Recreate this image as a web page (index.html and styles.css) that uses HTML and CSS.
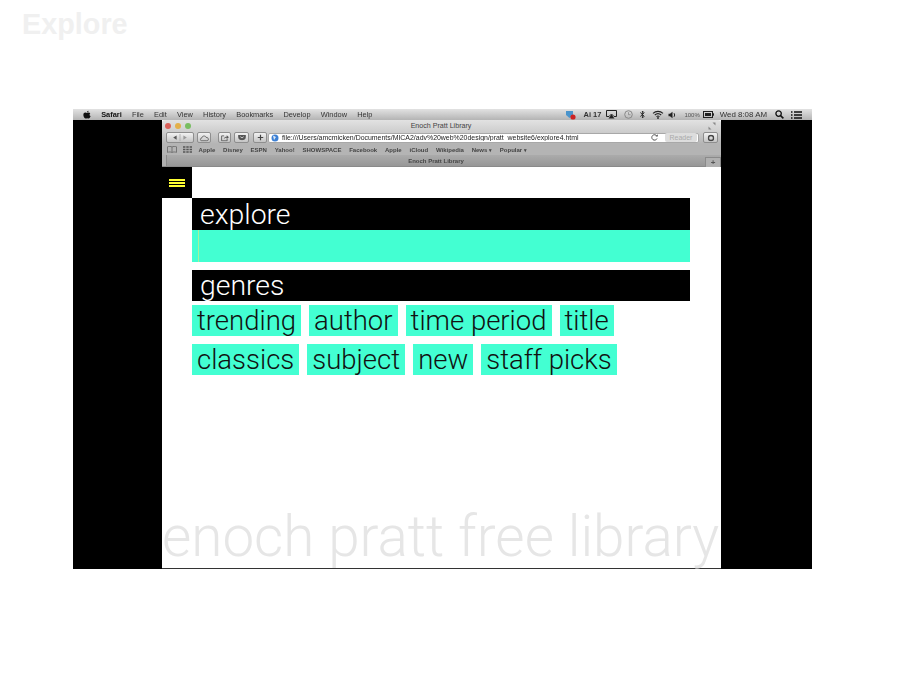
FILE: index.html
```html
<!DOCTYPE html>
<html>
<head>
	<meta http-equiv="Content-Type" content="text/html; charset=utf-8">
	<title>Explore</title>
	<link rel="stylesheet" href="styles.css">
</head>
<body>
	<h1 class="slide-title">Explore</h1>
	<div class="shot">
		<div class="menubar">
			<svg class="apple" width="9" height="10" viewBox="0 0 9 10"><path d="M6.2 0.2C6.3 1.2 5.4 2.2 4.5 2.2C4.4 1.2 5.3 0.3 6.2 0.2ZM4.6 2.7C5 2.7 5.6 2.2 6.4 2.2C7.1 2.2 7.8 2.6 8.2 3.2C7 3.9 7.2 5.7 8.6 6.2C8.2 7.4 7.3 9 6.3 9C5.7 9 5.4 8.6 4.7 8.6C4 8.6 3.6 9 3 9C1.9 9 0.4 6.8 0.4 5C0.4 3.2 1.5 2.3 2.7 2.3C3.4 2.3 4.1 2.7 4.6 2.7Z" fill="#111"/></svg>
			<b class="menu-app">Safari</b>
			<span>File</span><span>Edit</span><span>View</span><span>History</span><span>Bookmarks</span><span>Develop</span><span>Window</span><span>Help</span>
			<div class="status">
				<svg width="12" height="10" viewBox="0 0 12 10"><path d="M1 1H8V5L4.5 8L1 5Z" fill="#4a94cc"/><circle cx="8" cy="7" r="2.6" fill="#c22"/></svg>
				<span class="status-adobe">Ai 17</span>
				<svg class="status-air" width="11" height="9" viewBox="0 0 11 9"><path d="M0.5 0.5H10.5V6.5H8L5.5 4L3 6.5H0.5Z" fill="none" stroke="#222"/><path d="M2.5 8.5L5.5 4.5L8.5 8.5Z" fill="#222"/></svg>
				<svg class="status-time" width="9" height="9" viewBox="0 0 9 9"><circle cx="4.5" cy="4.5" r="3.8" fill="none" stroke="#888"/><path d="M4.5 2.2V4.7H6.5" fill="none" stroke="#888" stroke-width="0.8"/></svg>
				<svg class="status-bt" width="5" height="9" viewBox="0 0 5 9"><path d="M0.3 2.5L4.2 6.2L2.4 8V1L4.2 2.8L0.3 6.5" fill="none" stroke="#222" stroke-width="0.9"/></svg>
				<svg class="status-wifi" width="12" height="9" viewBox="0 0 12 9"><path d="M1 3.3C3.8 0.7 8.2 0.7 11 3.3M2.8 5C4.6 3.4 7.4 3.4 9.2 5M4.5 6.6C5.4 5.9 6.6 5.9 7.5 6.6" fill="none" stroke="#222" stroke-width="1.1"/><circle cx="6" cy="8" r="0.9" fill="#222"/></svg>
				<svg class="status-vol" width="9" height="8" viewBox="0 0 9 8"><path d="M0.5 2.7H2L4.5 0.7V7.3L2 5.3H0.5Z" fill="#222"/><path d="M6 2.2C6.8 3.2 6.8 4.8 6 5.8" fill="none" stroke="#222"/></svg>
				<span class="status-pct">100%</span>
				<svg class="status-batt" width="11" height="7" viewBox="0 0 11 7"><rect x="0.5" y="0.5" width="9" height="6" fill="none" stroke="#222"/><rect x="2" y="2" width="6" height="3" fill="#222"/><rect x="10" y="2.3" width="1" height="2.4" fill="#222"/></svg>
				<span class="status-clock">Wed 8:08 AM</span>
				<svg class="status-search" width="9" height="9" viewBox="0 0 9 9"><circle cx="3.6" cy="3.6" r="2.7" fill="none" stroke="#111" stroke-width="1.3"/><path d="M5.6 5.6L8.4 8.4" stroke="#111" stroke-width="1.5"/></svg>
				<svg width="11" height="8" viewBox="0 0 11 8"><path d="M0 1H1.5M3 1H11M0 4H1.5M3 4H11M0 7H1.5M3 7H11" stroke="#111" stroke-width="1.3"/></svg>
			</div>
		</div>
		<div class="desktop">
			<div class="window">
				<div class="chrome">
					<div class="titlebar">
						<div class="lights"><i class="red"></i><i class="amber"></i><i class="green"></i></div>
						<div class="window-name">Enoch Pratt Library</div>
						<svg class="resize" width="8" height="8" viewBox="0 0 8 8"><path d="M4.5 0.5H7.5V3.5ZM0.5 4.5V7.5H3.5Z" fill="#888"/></svg>
					</div>
					<div class="toolbar">
						<div class="btn btn-nav"><svg width="24" height="9" viewBox="0 0 24 9"><path d="M8 2V7L4 4.5Z" fill="#555"/><path d="M16 2V7L20 4.5Z" fill="#999"/><path d="M12 0V9" stroke="#aaa"/></svg></div>
						<div class="btn btn-cloud"><svg width="11" height="8" viewBox="0 0 11 8"><path d="M2.5 7.3C0 7.3 0 4.3 2.2 4.1C2.6 1.3 6.6 0.8 7.4 3.3C10.6 3 11 7.3 8.2 7.3Z" fill="none" stroke="#555"/></svg></div>
						<div class="btn btn-share"><svg width="10" height="8" viewBox="0 0 10 8"><path d="M4 1.5H1V7.3H7.5V5" fill="none" stroke="#555"/><path d="M3.5 5C4 3 5.5 2.4 7 2.4V0.8L9.6 3L7 5.2V3.6C5.5 3.6 4.5 4 3.5 5Z" fill="#555"/></svg></div>
						<div class="btn btn-pocket"><svg width="10" height="7" viewBox="0 0 10 7"><path d="M0.5 0.5H9.5V3C9.5 8 0.5 8 0.5 3Z" fill="#555"/><path d="M3 2.5L5 4L7 2.5" fill="none" stroke="#ddd"/></svg></div>
						<div class="btn btn-add"><svg width="7" height="7" viewBox="0 0 7 7"><path d="M3.5 0V7M0 3.5H7" stroke="#444" stroke-width="1.4"/></svg></div>
						<div class="address">
							<svg width="8" height="8" viewBox="0 0 8 8"><circle cx="4" cy="4" r="3.5" fill="#3b7fd4"/><path d="M2 1.5L5 3L3 6Z" fill="#dfeaf5"/></svg>
							<span class="url">file:///Users/amcmicken/Documents/MICA2/adv%20web%20design/pratt_website6/explore4.html</span>
							<svg class="reload" width="7" height="7" viewBox="0 0 7 7"><path d="M5.8 2A2.7 2.7 0 1 0 6 4.5" fill="none" stroke="#555"/><path d="M4.6 2.4H6.8V0.2Z" fill="#555"/></svg>
							<span class="reader">Reader</span>
						</div>
						<div class="btn btn-dl"><svg width="8" height="8" viewBox="0 0 8 8"><circle cx="4" cy="4" r="3" fill="none" stroke="#444" stroke-width="1.6"/></svg></div>
					</div>
					<div class="bookmarks">
						<svg width="10" height="7" viewBox="0 0 10 7"><path d="M0.5 0.8C2 0.2 4 0.2 5 1C6 0.2 8 0.2 9.5 0.8V6.4C8 5.8 6 5.8 5 6.5C4 5.8 2 5.8 0.5 6.4ZM5 1V6.5" fill="none" stroke="#666" stroke-width="0.8"/></svg>
						<svg class="grid-icon" width="9" height="7" viewBox="0 0 9 7"><path d="M0 1H9M0 3.5H9M0 6H9" stroke="#555" stroke-width="1.4" stroke-dasharray="2.4 0.9"/></svg>
						<span>Apple</span><span>Disney</span><span>ESPN</span><span>Yahoo!</span><span>SHOWSPACE</span><span>Facebook</span><span>Apple</span><span>iCloud</span><span>Wikipedia</span><span>News <small>▾</small></span><span>Popular <small>▾</small></span>
					</div>
					<div class="tabbar">
						<div class="tab-left"></div>
						<div class="tab-name">Enoch Pratt Library</div>
						<div class="tab-add">+</div>
					</div>
				</div>
				<div class="page">
					<div class="burger-row">
						<div class="burger"><i></i><i></i><i></i></div>
					</div>
					<div class="content">
						<h2 class="bar">explore</h2>
						<div class="search"><i class="caret"></i></div>
						<h2 class="bar bar-short">genres</h2>
						<div class="tags">
							<a>trending</a><a>author</a><a>time period</a><a>title</a>
							<a>classics</a><a>subject</a><a>new</a><a>staff picks</a>
						</div>
					</div>
					<div class="footer-name">enoch pratt free library</div>
				</div>
			</div>
		</div>
	</div>
</body>
</html>
```

FILE: styles.css
```css
*{margin: 0; padding: 0; box-sizing: border-box;}
html, body{height: 100%; background: #FFF; overflow: hidden;}
body{font-family: "Liberation Sans", Arial, sans-serif;}
svg{display: block; flex: none;}

.slide-title{height: 109px; padding: 9px 0 0 22px; font-size: 28.8px; line-height: 30px; font-weight: bold; color: #F0F0F0;}
.shot{width: 739px; height: 460px; margin-left: 73px; display: flex; flex-direction: column; background: #000;}

.menubar{height: 11px; display: flex; align-items: center; gap: 10.2px; padding-left: 10px; font-size: 7.4px; color: #333; background: linear-gradient(#E2E2E2, #B4B4B4); filter: blur(0.3px);}
.apple{width: 8px;}
.menu-app{color: #111;}
.status{margin-left: auto; display: flex; align-items: center; gap: 7px; padding-right: 10px;}
.status-adobe{font-weight: bold; font-size: 7.5px; margin-left: -1px;}
.status-air{margin-left: -2px;}
.status-vol{margin-left: -3px;}
.status-pct{font-size: 6px; color: #555;}
.status-batt{margin-left: -4px;}
.status-clock{margin: 0 1px 0 -1px; font-size: 7.9px;}

.desktop{flex: 1; display: flex; padding-left: 89px; min-height: 0;}
.window{width: 559px; display: flex; flex-direction: column; background: #FFF; border-bottom: 1px solid #333;}
.chrome{filter: blur(0.3px); border-radius: 3px 3px 0 0; overflow: hidden;}

.titlebar{height: 11px; display: flex; align-items: center; padding: 0 5px 0 3px; background: linear-gradient(#E2E2E2, #CFCFCF); font-size: 7.1px; color: #444;}
.lights{display: flex; gap: 4px; width: 40px;}
.lights i{width: 6px; height: 6px; border-radius: 50%;}
.red{background: #D9605A;}
.amber{background: #E3B04A;}
.green{background: #79BE62;}
.window-name{flex: 1; text-align: center; padding-right: 31px;}

.toolbar{height: 13px; display: flex; align-items: center; gap: 3px; padding: 0 3px 0 4px; background: linear-gradient(#CFCFCF, #B4B4B4);}
.btn{width: 14px; height: 11px; display: flex; align-items: center; justify-content: center; border-radius: 2px; border: 1px solid #8E8E8E; background: linear-gradient(#F2F2F2, #C4C4C4);}
.btn svg{transform: scale(0.85);}
.btn-nav{width: 28px;}
.btn-cloud{width: 14px;}
.btn-share{width: 13px; margin-left: 4px;}
.btn-pocket{width: 15px;}
.btn-add{margin-left: 1px;}
.btn-dl{width: 15px; margin-left: 1px;}
.address{flex: 1; height: 10px; display: flex; align-items: center; gap: 3px; margin-left: -2px; padding: 0 1px 0 2px; background: #FFF; border: 1px solid #A8A8A8; border-radius: 2px; font-size: 6.95px; color: #222; min-width: 0;}
.url{flex: 1; white-space: nowrap; overflow: hidden;}
.reload{margin-right: 4px;}
.reader{width: 32px; height: 9px; line-height: 9px; text-align: center; color: #AAA; background: #DDD; border-radius: 2px;}

.bookmarks{height: 11px; display: flex; align-items: center; gap: 7.8px; padding-left: 5px; font-size: 6px; font-weight: bold; color: #444; background: #B4B4B4;}
.bookmarks small{font-size: 5px;}
.grid-icon{margin: 0 -1px 0 -2px;}

.tabbar{height: 12px; display: flex; align-items: center; font-size: 6px; font-weight: bold; color: #444; background: linear-gradient(#ABABAB, #979797); border-bottom: 1px solid #8A8A8A;}
.tab-left{width: 5px; height: 11px; background: #B0B0B0; border-right: 1px solid #8A8A8A;}
.tab-name{flex: 1; text-align: center;}
.tab-add{width: 16px; height: 10px; line-height: 10px; margin-top: 2px; text-align: center; font-size: 8px; color: #555; background: #B0B0B0; border: 1px solid #8A8A8A; border-bottom: 0;}

.page{flex: 1; display: flex; flex-direction: column; min-height: 0; font-family: Roboto, "Liberation Sans", sans-serif; font-weight: 300;}
.burger-row{height: 31px;}
.burger{width: 30px; height: 31px; display: flex; flex-direction: column; justify-content: center; gap: 1px; padding: 0 7px; background: #000;}
.burger i{height: 2px; background: #FFFF33;}

.content{width: 498px; margin-left: 30px;}
.bar{height: 32px; padding-left: 8px; font-size: 28.4px; line-height: 33px; font-weight: 300; color: #FFF; background: #000;}
.bar-short{height: 31px; line-height: 32px;}
.search{height: 32px; margin-bottom: 8px; padding-left: 6px; background: #43FFD2;}
.caret{display: block; width: 1px; height: 32px; background: #A6F29A;}
.tags{display: flex; flex-wrap: wrap; gap: 8px; margin-top: 4px;}
.tags a{height: 31px; padding: 0 5px; font-size: 27.5px; line-height: 32px; color: #111; background: #43FFD2;}

.footer-name{margin-top: auto; height: 60px; font-size: 56.6px; line-height: 57px; white-space: nowrap; color: #E6E6E6;}
```
